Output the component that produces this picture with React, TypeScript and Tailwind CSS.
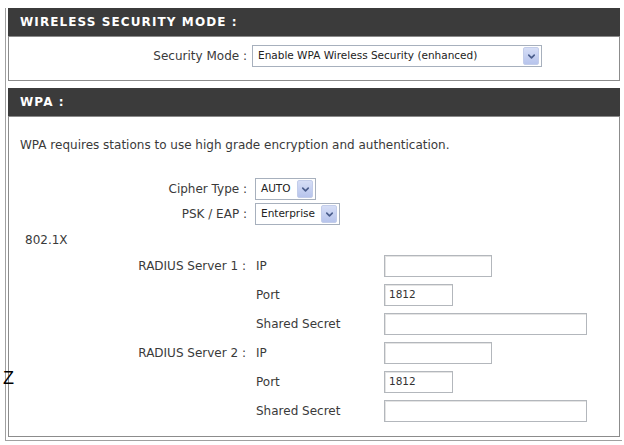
import { ChevronDown } from 'lucide-react'

const font = { fontFamily: '"DejaVu Sans", Verdana, sans-serif' }

function Header({ title }: { title: string }) {
  return (
    <div className="flex h-[29px] items-center border-b border-[#8a8a8a] bg-[#3b3b3b] pl-[12px] text-[12px] font-bold tracking-[1.1px] text-white">
      {title}
    </div>
  )
}

function Select({ value, width }: { value: string; width: string }) {
  return (
    <div
      className={`flex h-[22px] items-center justify-between border border-[#a7b0bd] bg-white pl-[5px] pr-[2px] text-[10.5px] text-[#222] ${width}`}
    >
      <span>{value}</span>
      <span className="flex h-[18px] w-[16px] items-center justify-center rounded-[2px] border border-[#c3cdea] bg-gradient-to-b from-[#d6def6] to-[#b7c4ec]">
        <ChevronDown className="size-[11px] text-[#4a5d8c]" strokeWidth={3.5} />
      </span>
    </div>
  )
}

function Input({ value = '', width }: { value?: string; width: string }) {
  return (
    <div
      className={`flex h-[22px] items-center border border-[#b3b7bc] bg-white pl-[4px] text-[10.5px] text-[#333] shadow-[inset_1px_1px_0_#e4e4e4] ${width}`}
    >
      {value}
    </div>
  )
}

function Radius({ n }: { n: number }) {
  const rows = [
    { label: `RADIUS Server ${n} :`, field: 'IP', input: <Input width="w-[108px]" /> },
    { label: '', field: 'Port', input: <Input value="1812" width="w-[69px]" /> },
    { label: '', field: 'Shared Secret', input: <Input width="w-[203px]" /> },
  ]
  return (
    <>
      {rows.map((r) => (
        <div key={r.field} className="flex h-[22px] items-center">
          <div className="w-[238px] pr-[1px] text-right">{r.label}</div>
          <div className="ml-[9px] w-[128px]">{r.field}</div>
          {r.input}
        </div>
      ))}
    </>
  )
}

export default function App() {
  return (
    <div className="relative h-[445px] w-[624px] overflow-hidden bg-white text-[12px] text-[#3a3a3a]" style={font}>
      <div className="ml-[5px] mt-[8px] w-[617px] border-b border-l border-[#a0a0a0] pb-[3px] pl-[2px]">
        {/* Wireless security mode */}
        <section className="w-[612px]">
          <Header title="WIRELESS SECURITY MODE :" />
          <div className="flex h-[44px] items-start border-x border-b border-[#8c8c8c] pt-[8px]">
            <div className="flex h-[22px] items-center">
              <div className="w-[238px] text-right">Security Mode :</div>
              <div className="ml-[5px]">
                <Select value="Enable WPA Wireless Security (enhanced)" width="w-[290px]" />
              </div>
            </div>
          </div>
        </section>

        <div className="h-[7px]" />

        {/* WPA */}
        <section className="w-[612px]">
          <Header title="WPA :" />
          <div className="flex h-[320px] flex-col border-x border-b border-[#8c8c8c] pt-[21px]">
            <p className="pl-[11px] leading-[14px]">
              WPA requires stations to use high grade encryption and authentication.
            </p>
            <div className="mt-[26px] flex flex-col gap-[3px]">
              <div className="flex h-[22px] items-center">
                <div className="w-[238px] text-right">Cipher Type :</div>
                <div className="ml-[8px]">
                  <Select value="AUTO" width="w-[61px]" />
                </div>
              </div>
              <div className="flex h-[22px] items-center">
                <div className="w-[238px] text-right">PSK / EAP :</div>
                <div className="ml-[8px]">
                  <Select value="Enterprise" width="w-[85px]" />
                </div>
              </div>
            </div>
            <div className="mt-[8px] pl-[16px] leading-[14px]">802.1X</div>
            <div className="mt-[8px] flex flex-col gap-[7px]">
              <Radius n={1} />
              <Radius n={2} />
            </div>
          </div>
        </section>
      </div>

      {/* neighbouring page text showing at the edge */}
      <span
        className="absolute left-[3px] top-[369px] text-[18px] font-medium leading-none text-black"
        style={{ fontFamily: '"Liberation Sans", Arial, sans-serif' }}
      >
        Z
      </span>
    </div>
  )
}
